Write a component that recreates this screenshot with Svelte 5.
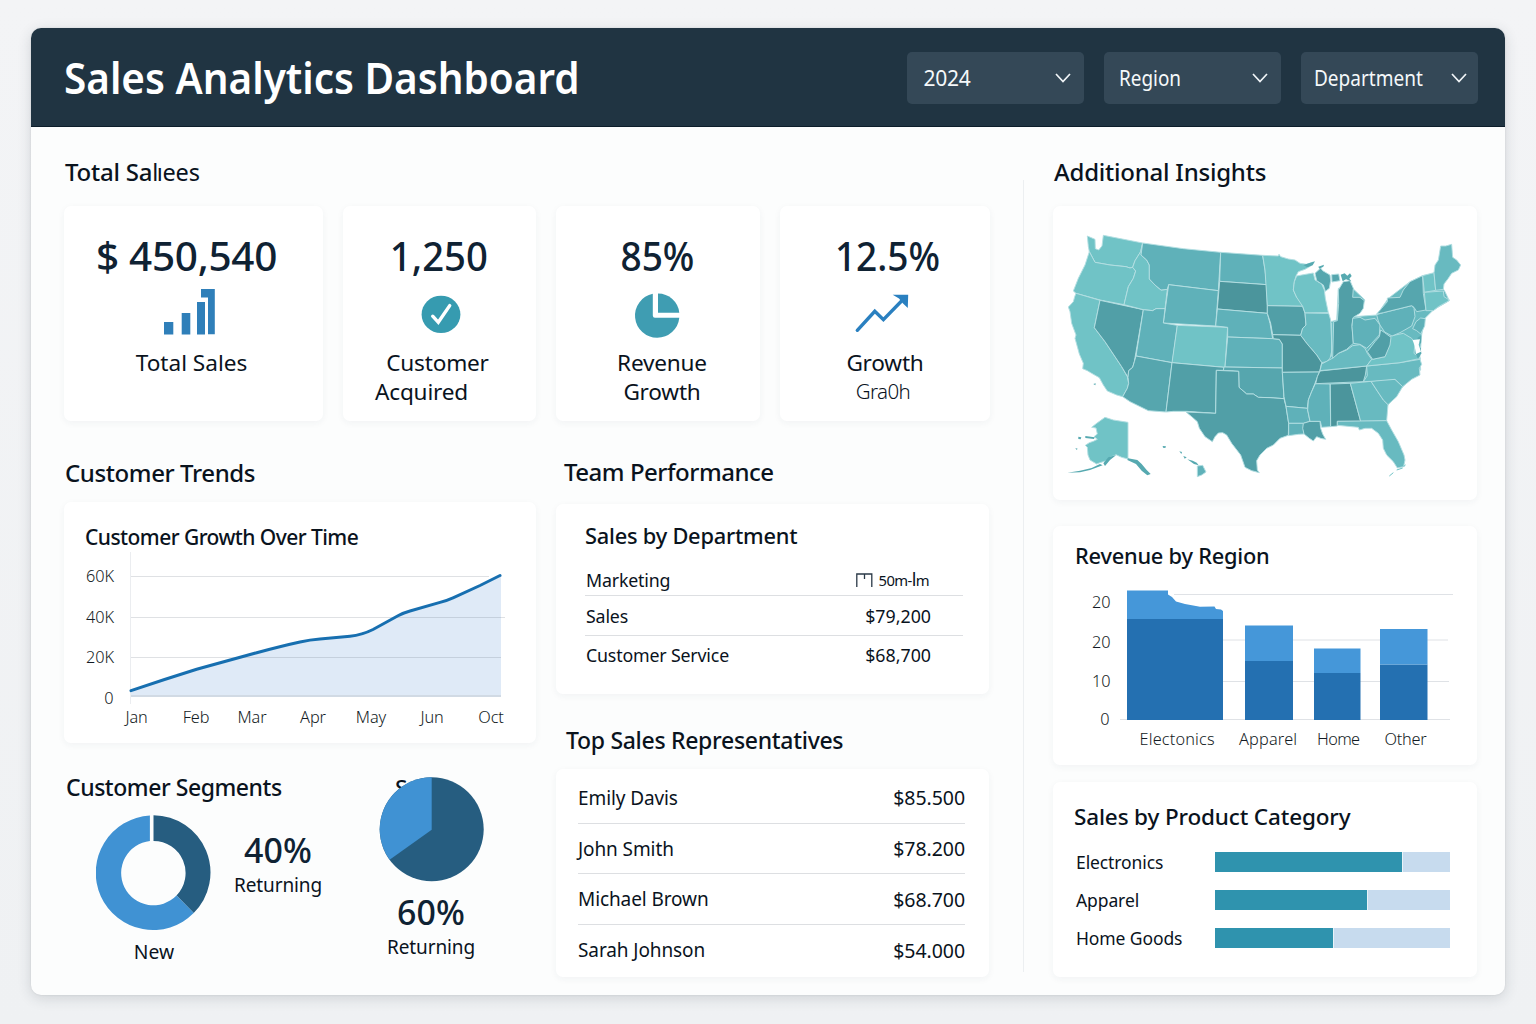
<script>
  const filters = [
    { label: '2024', cls: 'year' },
    { label: 'Region', cls: 'region' },
    { label: 'Department', cls: 'dept' }
  ];

  const departments = [
    { name: 'Sales', amount: '$79,200' },
    { name: 'Customer Service', amount: '$68,700' }
  ];

  const reps = [
    { name: 'Emily Davis', amount: '$85.500' },
    { name: 'John Smith', amount: '$78.200' },
    { name: 'Michael Brown', amount: '$68.700' },
    { name: 'Sarah Johnson', amount: '$54.000' }
  ];

  const categories = [
    { name: 'Electronics', value: 79.9 },
    { name: 'Apparel', value: 65 },
    { name: 'Home Goods', value: 50.5 }
  ];

  const months = [
    { label: 'Jan', x: 136.5 },
    { label: 'Feb', x: 196 },
    { label: 'Mar', x: 252 },
    { label: 'Apr', x: 313 },
    { label: 'May', x: 371 },
    { label: 'Jun', x: 432 },
    { label: 'Oct', x: 491 }
  ];

  const bars = [
    { label: 'Apparel', x: 1245, w: 48, top: 625.5, split: 661, lx: 1268, len: 58 },
    { label: 'Home', x: 1314, w: 46.5, top: 648.5, split: 673, lx: 1338.5, len: 43 },
    { label: 'Other', x: 1380, w: 47.5, top: 629, split: 664.5, lx: 1405.5, len: 42 }
  ];

  // State outlines; tone picks the fill
  const states = [
    { t: 'b', p: '860,330 865,235 908,235 945,270 910,320 980,315 1015,265 1080,215 1118,197 1150,190 1185,245 1198,272 1150,300 1125,325 1115,375 1110,440 1112,480 1058,530 1010,590 1008,632 800,632 800,400 842,335' },
    { t: 'a', p: '112,78 135,88 136,116 146,120 156,108 160,76 278,99 272,125 255,152 248,172 240,174 228,170 180,165 135,157 118,125 115,110' },
    { t: 'a', p: '118,125 135,157 180,165 228,170 240,174 248,172 257,183 250,205 235,230 222,284 150,270 78,250 70,243 85,205 105,165' },
    { t: 'a', p: '78,250 150,271 133,353 165,395 215,470 232,500 236,520 232,535 218,560 200,555 172,543 160,525 148,503 125,490 112,482 98,476 100,460 88,432 82,410 75,385 78,375 65,340 60,305 55,291 70,275 74,260' },
    { t: 'd', p: '150,271 280,299 253,455 248,472 236,482 234,502 215,470 165,395 133,353' },
    { t: 'a', p: '278,99 273,135 290,150 298,165 298,207 315,225 333,240 352,238 345,296 318,296 308,302 280,299 222,284 235,230 250,205 257,183 248,172 255,152 272,125' },
    { t: 'c', p: '278,99 400,116 512,127 505,242 356,224 352,238 333,240 315,225 298,207 298,165 290,150 273,135' },
    { t: 'c', p: '356,224 505,242 497,348 340,339' },
    { t: 'c', p: '280,299 308,302 318,296 345,296 340,339 382,346 367,458 258,438' },
    { t: 'a', p: '382,346 533,352 525,472 366,458' },
    { t: 'd2', p: '258,438 366,458 348,606 295,602 240,575 218,560 232,535 236,520 234,502 236,482 248,472 253,455' },
    { t: 'd', p: '366,458 522,472 520,481 499,481 497,610 410,604 370,604 348,606' },
    { t: 'c', p: '512,127 638,136 645,180 650,224 509,214' },
    { t: 'e', p: '509,214 650,224 652,287 652,310 502,297' },
    { t: 'c', p: '502,297 652,310 660,340 668,386 533,381 533,352 497,348' },
    { t: 'c', p: '533,381 668,386 688,388 697,402 697,474 525,471' },
    { t: 'd2', p: '522,471 697,474 697,487 702,566 660,563 625,562 610,552 590,552 567,532 566,484 520,481' },
    { t: 'd', p: '499,481 566,484 567,532 590,552 610,552 625,562 660,563 702,566 708,590 716,640 715,676 690,685 670,705 650,715 630,735 620,752 622,780 628,788 605,782 585,772 572,735 545,700 530,675 518,668 505,669 495,680 487,695 465,680 448,655 442,635 425,620 408,606 497,610' },
    { t: 'a', p: '638,136 685,138 687,133 692,140 715,147 735,150 750,160 770,163 790,156 782,168 765,178 745,185 738,198 733,215 730,240 740,262 755,280 758,289 652,287 645,180' },
    { t: 'd', p: '652,287 758,289 765,310 768,345 758,355 752,376 668,374 662,340 652,310' },
    { t: 'a', p: '740,198 755,195 790,189 795,210 815,222 823,240 826,265 835,308 765,309 758,289 740,262 730,240 733,215' },
    { t: 'b', p: '765,309 836,310 842,330 846,420 840,445 830,455 815,458 800,435 770,400 752,376 758,355 768,345' },
    { t: 'e', p: '668,374 752,376 770,400 800,435 815,458 810,480 808,486 697,487 697,402 688,388 670,386' },
    { t: 'd2', p: '697,487 808,486 795,520 785,545 775,570 772,595 708,589 702,560' },
    { t: 'c', p: '708,589 772,595 780,634 760,640 716,640' },
    { t: 'c', p: '716,640 760,640 762,672 745,673 716,677' },
    { t: 'd', p: '760,640 780,634 810,634 812,655 818,672 827,688 812,685 800,680 790,693 778,685 762,672 758,655' },
    { t: 'c', p: '796,521 840,522 842,650 815,652 811,634 780,634 773,600 775,570 785,545' },
    { t: 'e', p: '841,522 901,520 932,634 862,634 862,648 842,650' },
    { t: 'e', p: '810,483 950,468 946,495 940,515 797,521 802,500' },
    { t: 'b', p: '901,520 963,514 980,540 1000,570 1014,584 1010,632 932,634' },
    { t: 'b', p: '862,634 1010,632 1025,660 1045,695 1062,735 1065,750 1061,770 1042,774 1030,755 1010,735 1000,715 998,690 985,670 965,655 945,655 928,660 925,652 862,646' },
    { t: 'b', p: '963,514 1000,508 1035,508 1058,530 1040,560 1014,584 1000,570 980,540' },
    { t: 'b', p: '950,468 1050,458 1110,448 1115,463 1108,475 1110,495 1085,508 1058,530 1035,508 963,514 940,515 952,497' },
    { t: 'b', p: '845,446 865,430 890,420 908,407 930,404 945,415 952,430 965,448 950,468 810,482 815,462' },
    { t: 'a', p: '1022,378 1060,370 1085,385 1095,400 1092,430 1112,445 1050,458 950,468 965,448 1005,440 1018,405' },
    { t: 'd', p: '992,360 1004,368 1023,382 1020,405 1005,440 968,448 952,425 975,395 988,380' },
    { t: 'd', p: '865,240 880,215 900,212 910,235 908,262 930,262 943,272 940,295 930,310 910,322 906,345 910,400 890,418 865,430 848,445 851,335 862,332 866,280' },
    { t: 'c', p: '908,325 930,322 945,330 975,325 990,345 988,375 965,400 950,415 930,403 910,400 906,350' },
    { t: 'c', p: '980,314 1000,308 1085,287 1092,295 1095,320 1085,348 1050,368 1026,378 1004,366 990,345 984,330' },
    { t: 'd2', p: '980,312 995,295 1012,275 1012,264 1050,262 1060,240 1080,215 1118,197 1120,250 1128,300 1100,305 1092,292 1085,287 1000,308' },
    { t: 'a', p: '1118,197 1152,188 1157,241 1123,247' },
    { t: 'b', p: '1155,165 1165,150 1172,108 1187,108 1205,103 1208,142 1220,150 1232,165 1225,180 1205,190 1195,205 1182,222 1180,238 1157,241 1152,188' },
    { t: 'a', p: '1123,247 1180,243 1182,260 1198,270 1190,276 1165,290 1150,302 1128,302' },
    { t: 'c', p: '1098,335 1112,324 1126,326 1124,348 1112,372 1100,362 1088,356' },
    { t: 'd2', p: '795,190 812,174 818,182 840,195 842,212 838,235 826,244 820,225 800,212' },
    { t: 'd2', p: '845,194 866,192 870,212 846,216' },
    { t: 'a', p: '125,652 140,640 165,622 190,630 234,637 234,747 215,742 198,734 190,738 180,742 170,752 150,758 140,762 120,750 114,735 112,712 106,706 118,698 130,694 142,688 132,680 142,672 138,654' },
    { t: 'c', p: '442,768 458,766 468,786 455,795 442,800' }
  ];

  const islets = [
    '52,788 90,782 125,774 150,762 158,766 120,780 90,787',
    '160,760 175,742 188,738 198,736 180,750 165,768',
    '234,745 262,750 275,762 290,780 302,792 292,796 275,782 258,762 232,750',
    '85,680 94,682 92,688 85,687', '106,678 134,682 132,687 106,684', '76,714 83,716 80,720',
    '130,522 137,520 136,526', '338,708 348,709 346,714 339,713', '388,724 396,726 394,732',
    '400,738 410,742 404,746', '412,748 428,752 440,758 446,766 432,762',
    '872,194 884,190 892,197 900,190 905,198 898,206 904,214 888,208 878,214',
    '760,165 795,154 788,166 772,172', '1102,384 1114,376 1113,402 1108,395', '1098,434 1112,412 1114,430 1104,446',
    '805,170 822,164 820,170 808,176'
  ];
</script>

<div class="app">
  <header>
    <h1>Sales Analytics Dashboard</h1>
    <div class="filters">
      {#each filters as f}
        <button class="select {f.cls}">
          <span>{f.label}</span>
          <svg width="18" height="12" viewBox="0 0 18 12"><path d="M2 2 L9 9.5 L16 2" /></svg>
        </button>
      {/each}
    </div>
  </header>

  <div class="body">
    <main>
      <h2 class="top">Total Sa<span class="thin">l<span class="tight">ı</span>ees</span></h2>
      <section class="kpis">
        <article class="card kpi k1">
          <strong>$ 450,540</strong>
          <svg width="60" height="68" viewBox="160 280 60 68" fill="#2f7fb9">
            <rect x="164" y="322" width="9.3" height="12.5" />
            <rect x="181.7" y="313" width="8.6" height="21.5" />
            <rect x="197" y="302" width="8" height="32.5" />
            <path d="M201 289H214.8V334.3H208V297.5H201Z" />
          </svg>
          <span class="l1">Total Sales</span>
        </article>
        <article class="card kpi k2">
          <strong>1,250</strong>
          <svg width="60" height="68" viewBox="410.7 280 60 68">
            <ellipse cx="440.7" cy="314.4" rx="19.4" ry="18.7" fill="#369bb0" />
            <path d="M432.4 316.2 L438 322.3 L449.4 305.6" fill="none" stroke="#fff" stroke-width="3.4" stroke-linecap="round" />
          </svg>
          <span class="l1">Customer</span>
          <span class="l2">Acquired</span>
        </article>
        <article class="card kpi k3">
          <strong>85%</strong>
          <svg width="60" height="68" viewBox="627 280 60 68" fill="#3f9db2">
            <path d="M652.8 293.8 A22.2 22.2 0 1 0 679.3 317.8 H655 Q652.8 317.8 652.8 315.6Z" />
            <path d="M658 293.5 A21.5 21.5 0 0 1 679.3 312.7 H658Z" />
          </svg>
          <span class="l1">Revenue</span>
          <span class="l2">Growth</span>
        </article>
        <article class="card kpi k4">
          <strong>12.5%</strong>
          <svg width="60" height="68" viewBox="852 280 60 68">
            <path d="M857.3 330.3 L874.8 311.3 L883.4 319.6 L903 299.5" fill="none" stroke="#2a80c0" stroke-width="3.4" stroke-linecap="round" />
            <path d="M892.7 294.8H908.2L907.8 308L903 303.5L899 298.6Z" fill="#2a80c0" />
          </svg>
          <span class="l1">Growth</span>
          <span class="l2">Gra0h</span>
        </article>
      </section>

      <div class="columns">
        <div class="col">
          <h2 class="trends">Customer Trends</h2>
          <section class="card growth">
            <h3>Customer Growth Over Time</h3>
            <svg width="472" height="191" viewBox="64 552 472 191">
              <path d="M130.5 552V704" stroke="#ebedf0" />
              <path d="M131 690.7 L196.7 669.3 L256.7 652.7 L300 642 Q310 639.6 320 638.9 L350 636.3 Q362 635 373 629.5 L398 615.8 Q404 612.6 410 611 L440 602.4 Q447 600.5 453 597.8 L480 585.5 L501 575V697H131Z" fill="#dfeaf7" />
              <path d="M131 576.5H489M131 617.5H505M131 657.5H501" stroke="#5f6b78" stroke-opacity=".2" />
              <path d="M131 696H501" stroke="#cdd4de" stroke-width="1.6" />
              <path d="M131 690.7 Q164 679.5 196.7 669.3 L256.7 652.7 Q283 645.7 300 642 Q310 639.6 320 638.9 L350 636.3 Q362 635 373 629.5 L398 615.8 Q404 612.6 410 611 L440 602.4 Q447 600.5 453 597.8 L480 585.5 L500 575.5" fill="none" stroke="#176fb0" stroke-width="3" stroke-linecap="round" />
              <g class="axis" text-anchor="end">
                <text x="114" y="582">60K</text>
                <text x="114" y="623">40K</text>
                <text x="114" y="663">20K</text>
                <text x="113.5" y="704">0</text>
              </g>
              <g class="axis" text-anchor="middle">
                {#each months as m}<text x={m.x} y="723">{m.label}</text>{/each}
              </g>
            </svg>
          </section>
          <section class="segments">
            <h2>Customer Segments</h2>
            <div class="seg-row">
              <figure class="donut">
                <svg width="116" height="116" viewBox="95.5 815.5 116 116">
                  <path d="M153 815.8 A57.3 57.3 0 0 1 193.2 913.6 L176 896 A32.2 32.2 0 0 0 153 841.4Z" fill="#265d80" />
                  <path d="M193.2 913.6 A57.3 57.3 0 1 1 149.4 816 V841.6 A32.2 32.2 0 1 0 176 896Z" fill="#4092d3" />
                </svg>
                <figcaption>New</figcaption>
              </figure>
              <div class="pct first"><b>40%</b><span>Returning</span></div>
              <figure class="pie">
                <svg width="110" height="112" viewBox="377 771 110 112">
                  <text x="395" y="796" class="hidden-title">S</text>
                  <circle cx="431.7" cy="829.3" r="52" fill="#265d80" />
                  <path d="M431.7 829.8 V777.3 A52 52 0 0 0 389.6 859.8Z" fill="#4092d3" />
                </svg>
                <div class="pct"><b>60%</b><span>Returning</span></div>
              </figure>
            </div>
          </section>
        </div>

        <div class="col second">
          <h2 class="team">Team Performance</h2>
          <section class="card depts">
            <h3>Sales by Department</h3>
            <ul>
              <li class="odd">
                <span>Marketing</span>
                <span class="target">
                  <svg width="17" height="14" viewBox="0 0 17 14"><path d="M.8 14V1H15.8V14M8.5 1V6" /></svg>
                  <em>50m-<i>l</i>m</em>
                </span>
              </li>
              {#each departments as d}
                <li><span>{d.name}</span><span class="amt">{d.amount}</span></li>
              {/each}
            </ul>
          </section>
          <h2 class="reps-title">Top Sales Representatives</h2>
          <section class="card reps">
            <ul>
              {#each reps as r}
                <li><span>{r.name}</span><span class="amt">{r.amount}</span></li>
              {/each}
            </ul>
          </section>
        </div>
      </div>
    </main>

    <aside>
      <h2 class="top">Additional Insights</h2>
      <section class="card map">
        <svg width="424" height="294" viewBox="9 -12 1272 882">
          {#each states as s}<polygon class="st {s.t}" points={s.p} />{/each}
          <path d="M845 338V440" class="river" />
          {#each islets as i}<polygon class="islet" points={i} />{/each}
          <path d="M1018 798 L1030 788 M1040 780 L1058 774 M1062 770 L1066 764" stroke="#6fc3c6" stroke-width="3" fill="none" />
          <path d="M1088 390 L1110 388 L1106 404 L1113 425 L1098 432 L1094 408Z" fill="#fff" />
        </svg>
      </section>
      <section class="card revenue">
        <h3>Revenue by Region</h3>
        <svg width="424" height="185" viewBox="1053 580 424 185">
          <path d="M1174 594.5H1453M1223 640H1448M1223 681.5H1449M1120 719.5H1450" stroke="#dfe2e6" fill="none" />
          <rect x="1127" y="619" width="96" height="101" fill="#2470b1" />
          <path d="M1127 590.5H1168V594.5L1172 597L1176 601.5L1185 604L1200 606.8L1214.5 606.5L1216 609L1221 609.5L1223 611V619H1127Z" fill="#4597d9" />
          {#each bars as b}
            <rect x={b.x} y={b.split} width={b.w} height={720 - b.split} fill="#2470b1" />
            <rect x={b.x} y={b.top} width={b.w} height={b.split - b.top} fill="#4597d9" />
          {/each}
          <g class="axis" text-anchor="end">
            <text x="1110.5" y="608">20</text>
            <text x="1110.5" y="648">20</text>
            <text x="1110.5" y="687">10</text>
            <text x="1109.5" y="725">0</text>
          </g>
          <g class="axis" text-anchor="middle">
            <text x="1177" y="745" textLength="75">Electonics</text>
            {#each bars as b}<text x={b.lx} y="745" textLength={b.len}>{b.label}</text>{/each}
          </g>
        </svg>
      </section>
      <section class="card product">
        <h3>Sales by Product Category</h3>
        {#each categories as c}
          <div class="cat">
            <span>{c.name}</span>
            <div class="track"><div class="fill" style="width: {c.value}%"></div></div>
          </div>
        {/each}
      </section>
    </aside>
  </div>
</div>

<style>
  :global(body) {
    background: linear-gradient(#f3f4f6, #eff1f3);
    font-family: 'Noto Sans', 'Open Sans', sans-serif;
    color: #0a131d;
  }
  :global(#app) { padding: 28px 31px 29px; }
  * { box-sizing: border-box; }
  h1, h2, h3, ul, figure { margin: 0; padding: 0; }
  ul { list-style: none; }
  svg { display: block; flex: none; }

  .app {
    height: 967px;
    border-radius: 10px;
    background: #fcfdfd;
    overflow: hidden;
    box-shadow: 0 3px 14px rgba(40, 50, 60, .16), 0 0 2px rgba(40, 50, 60, .12);
  }
  header {
    height: 99px;
    padding: 2px 27.5px 0 33px;
    display: flex;
    align-items: center;
    justify-content: space-between;
    background: #203442;
    border-bottom: 1px solid #0c1d2a;
  }
  h1 { font-size: 42.5px; font-weight: 600; color: #fff; white-space: nowrap; line-height: 1; transform: scaleX(.952); transform-origin: left; }
  .filters { display: flex; gap: 20px; }
  .select {
    width: 177px;
    height: 52px;
    border: 0;
    border-radius: 5px;
    padding: 0 12px 0 17px;
    display: flex;
    align-items: center;
    justify-content: space-between;
    background: #344857;
    color: #f5f8fa;
    font: 400 21px 'Noto Sans', sans-serif;
  }
  .select span { transform-origin: left; }
  .year { letter-spacing: -.3px; }
  .select svg { fill: none; stroke: #f0f4f7; stroke-width: 1.7; }
  .region { padding-left: 15px; }
  .region span { transform: scaleX(.9); }
  .dept { padding-left: 13px; padding-right: 10px; }
  .dept span { transform: scaleX(.905); margin-right: -14px; }

  .body { display: flex; height: 868px; }
  main { width: 992px; padding: 0 33px; }
  aside {
    width: 482px;
    padding: 0 28px 0 30px;
    background: linear-gradient(#eceff1, #eceff1) 0 53px / 1px 792px no-repeat;
  }
  h2 { font-size: 24px; font-weight: 500; letter-spacing: -.35px; white-space: nowrap; line-height: 30px; }
  h3 { font-size: 21.8px; font-weight: 500; letter-spacing: -.22px; white-space: nowrap; line-height: 30px; }
  h2.top { height: 79px; padding: 30px 0 0 1px; letter-spacing: -.22px; }
  .thin { font-weight: 400; font-size: 23.5px; letter-spacing: -.2px; }
  .tight { margin-left: -1.5px; }

  .card { background: #fff; border-radius: 7px; box-shadow: 0 2px 7px rgba(30, 50, 80, .05); }

  .kpis { display: grid; grid-template-columns: 259px 193px 204px 210px; column-gap: 20px; height: 215px; width: 926px; }
  .kpi { display: flex; flex-direction: column; align-items: center; padding-top: 26px; }
  .kpi strong { font-size: 40.5px; font-weight: 500; line-height: 48px; color: #0f2233; white-space: nowrap; transform: scaleX(.915); }
  .kpi.k1 strong { margin-right: 14px; letter-spacing: -.3px; transform: none; }
  .kpi span { font-size: 22.6px; line-height: 29px; letter-spacing: -.2px; }
  .k1 svg { margin-right: 7px; }
  .kpi.k1 .l1 { margin-right: 4px; letter-spacing: 0; }
  .k2 svg { margin-left: 2px; }
  .k2 .l1 { margin-right: 4px; }
  .k2 .l2 { margin-right: 36px; }
  .kpi.k2 strong { margin-right: 1px; transform: scaleX(.945); }
  .k3 strong, .k3 svg { margin-right: 2px; }
  .k3 .l1, .k3 .l2 { margin-left: 8px; }
  .k4 strong { margin-left: 6px; }
  .k4 svg { margin-right: 6px; }
  .kpi.k4 .l2 { font-size: 20.5px; letter-spacing: -.6px; margin-right: 4px; font-weight: 350; }

  .columns { display: flex; gap: 20px; }
  .col { width: 472px; }
  .col.second { width: 433px; }
  .trends { height: 81px; padding: 37px 0 0 1px; letter-spacing: -.4px; }
  .team { height: 83px; padding: 36px 0 0 8px; letter-spacing: -.48px; }

  .growth { height: 241px; }
  .growth h3 { height: 50px; padding: 20px 0 0 21px; font-size: 21px; letter-spacing: -.55px; }
  .axis text { font-size: 16.3px; fill: #131b24; font-weight: 350; letter-spacing: -.1px; }

  .segments h2 { height: 59px; padding: 29px 0 0 2px; font-size: 23px; letter-spacing: -.45px; }
  .seg-row { display: flex; align-items: flex-start; margin-top: 13px; }
  .donut { width: 116px; margin-left: 32px; }
  .donut figcaption { text-align: center; font-size: 19.3px; line-height: 26px; margin-top: 8px; }
  .pct { display: flex; flex-direction: column; align-items: center; }
  .pct b { font-size: 35px; font-weight: 500; line-height: 40px; color: #0f2233; transform: scaleX(.97); }
  .pct span { font-size: 19px; line-height: 30px; letter-spacing: -.1px; }
  .first { width: 90px; margin: 15px 0 0 21px; }
  .pie { width: 110px; margin: -44px 0 0 54px; }
  .pie .pct { margin: 9px 2px 0 0; }
  .hidden-title { font-size: 22.5px; font-weight: 500; fill: #0a131d; }

  .depts { height: 190px; padding: 18px 26px 0 29px; }
  .depts h3 { margin-top: -1px; margin-bottom: 1px; }
  .depts li {
    height: 39.5px;
    display: flex;
    align-items: center;
    justify-content: space-between;
    padding: 1px 32px 0 1px;
    font-size: 17.8px;
    letter-spacing: -.18px;
    border-bottom: 1px solid #dddfe2;
  }
  .depts li.odd { height: 44px; padding-top: 12px; padding-right: 34px; }
  .depts li:last-child { border: 0; padding-top: 0; }
  .depts .amt { letter-spacing: 0; }
  .target { display: flex; align-items: center; gap: 6px; }
  .target svg { fill: none; stroke: #2a3947; stroke-width: 1.3; }
  .target em { font-style: normal; font-size: 14.8px; letter-spacing: -.6px; line-height: 20px; }
  .target i { font-style: normal; font-size: 18px; }
  .reps-title { height: 75px; padding: 31px 0 0 10px; font-size: 23px; letter-spacing: -.3px; }
  .reps { height: 208px; padding: 4px 24px 0 22px; }
  .reps li { height: 50.6px; display: flex; align-items: center; justify-content: space-between; font-size: 19px; letter-spacing: -.1px; border-bottom: 1px solid #dddfe2; }
  .reps li:nth-child(2), .reps li:nth-child(3) { padding-top: 1px; }
  .reps li:last-child { border: 0; }
  .reps .amt { font-size: 19.5px; letter-spacing: -.05px; }

  .map { height: 294px; }
  .st { stroke: #b4dfe2; stroke-width: 2.8; stroke-linejoin: round; }
  .a { fill: #70c3c6; }
  .b { fill: #68bac0; }
  .c { fill: #5fb1b9; }
  .d2 { fill: #56a6ae; }
  .d { fill: #519fa7; }
  .e { fill: #4b959c; }
  .islet { fill: #56a9b0; }
  .river { stroke: #b4dfe2; stroke-width: 3; }

  .revenue { height: 239px; margin-top: 26px; }
  .revenue h3 { height: 54px; padding: 15px 0 0 22px; }
  .product { height: 195px; margin-top: 17px; padding: 20px 27px 0 21px; }
  .product h3 { height: 41px; font-size: 22.5px; letter-spacing: -.15px; }
  .cat { display: flex; align-items: center; justify-content: space-between; height: 38px; padding-left: 2px; font-size: 17.5px; letter-spacing: -.1px; }
  .track { width: 235px; height: 20px; background: #c7dbee; }
  .fill { height: 100%; background: #2f93ae; border-right: 1px solid #e8f3f8; }
</style>
